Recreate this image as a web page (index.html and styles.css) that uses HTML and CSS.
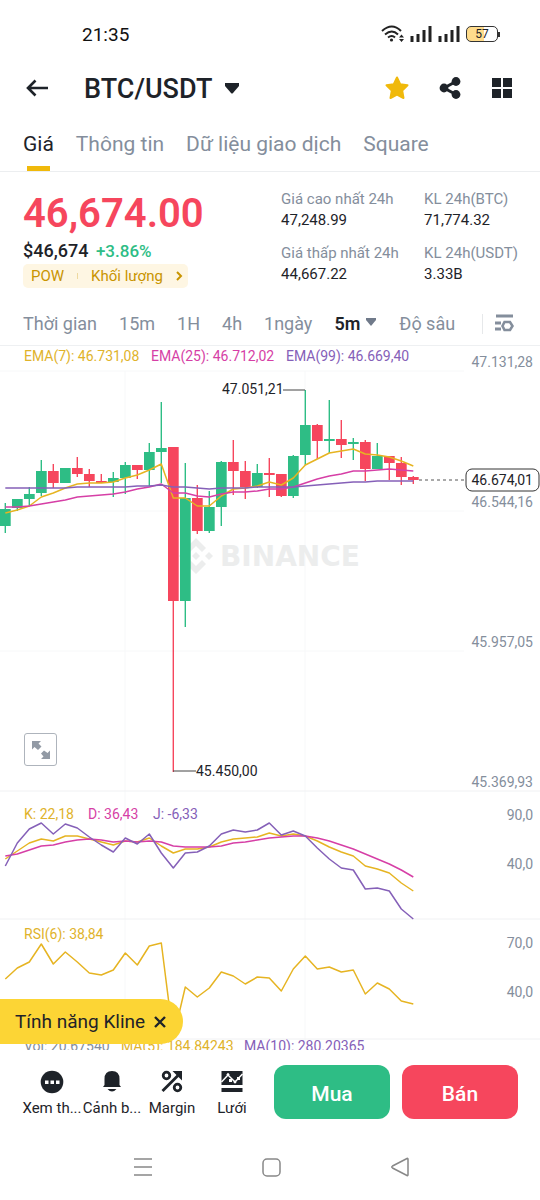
FILE: index.html
```
<!DOCTYPE html>
<html lang="vi">
<head>
    <meta charset="UTF-8">
    <meta name="viewport" content="width=device-width, initial-scale=1.0">
    <title>BTC/USDT</title>
    <link rel="stylesheet" href="styles.css">
</head>
<body>

    <div class="status-bar">
        <span class="clock">21:35</span>
        <div class="status-icons">
            <svg width="23" height="18" viewBox="0 0 23 18" fill="none" stroke="#222" stroke-width="2">
                <path d="M1 6 Q11 -3 20 6 M4 9.500 Q11 3.500 17 9.500 M7 12.500 Q11 9.500 14 12.500"/>
                <circle cx="10.500" cy="15" r="1.600" fill="#222" stroke="none"/>
                <path d="M18 12.500 L20.500 9.500 L23 12.500 Z M18 14 L20.500 17 L23 14 Z" fill="#222" stroke="none"/>
            </svg>
            <svg width="22" height="16" viewBox="0 0 22 16" stroke="#222" stroke-width="3">
                <path d="M2 16 V10 M8 16 V8 M14 16 V4 M20 16 V0"/>
            </svg>
            <svg width="22" height="16" viewBox="0 0 22 16" stroke="#222" stroke-width="3">
                <path d="M2 16 V10 M8 16 V8 M14 16 V4 M20 16 V0"/>
            </svg>
            <span class="battery">57</span>
        </div>
    </div>

    <header class="top-bar">
        <button class="icon-btn" aria-label="Quay lại">
            <svg width="22" height="18" viewBox="0 0 22 18" fill="none" stroke="#1e2329" stroke-width="2.600">
                <path d="M22 9 H2 M9.500 1.500 L2 9 L9.500 16.500"/>
            </svg>
        </button>
        <button class="pair">BTC/USDT
            <svg width="16" height="14" viewBox="0 0 16 14"><path d="M1 1 H15 V4 L9 11 Q8 12 7 11 L1 4 Z" fill="#1e2329"/></svg>
        </button>
        <div class="top-actions">
            <button class="icon-btn" aria-label="Yêu thích">
                <svg width="24" height="24" viewBox="0 0 24 24"><path d="M12 1.500 L15.200 8.300 L22.500 9.300 L17.200 14.600 L18.500 22 L12 18.600 L5.500 22 L6.800 14.600 L1.500 9.300 L8.800 8.300 Z" fill="#f0b90b" stroke="#f0b90b" stroke-width="2" stroke-linejoin="round"/></svg>
            </button>
            <button class="icon-btn" aria-label="Chia sẻ">
                <svg width="22" height="22" viewBox="0 0 22 22" fill="#1e2329">
                    <path d="M17 4.500 L5 11 L17 17.500" fill="none" stroke="#1e2329" stroke-width="3"/>
                    <circle cx="17" cy="4.500" r="4.400"/><circle cx="5" cy="11" r="4.400"/><circle cx="17" cy="17.500" r="4.400"/>
                </svg>
            </button>
            <button class="icon-btn" aria-label="Bố cục">
                <svg width="22" height="22" viewBox="0 0 22 22" fill="#1e2329">
                    <path d="M1 1 H10 V10 H1 Z M12 1 H21 V10 H12 Z M1 12 H10 V21 H1 Z M12 12 H21 V21 H12 Z"/>
                </svg>
            </button>
        </div>
    </header>

    <nav class="tabs">
        <a href="#" class="active">Giá</a>
        <a href="#">Thông tin</a>
        <a href="#">Dữ liệu giao dịch</a>
        <a href="#">Square</a>
    </nav>

    <section class="ticker">
        <div class="price-box">
            <div class="price">46,674.00</div>
            <div class="sub-price">$46,674 <span class="up">+3.86%</span></div>
            <button class="tag">
                <span>POW</span>
                <span class="tag-line"></span>
                <span>Khối lượng</span>
                <svg width="7" height="10" viewBox="0 0 7 10" fill="none" stroke="#c99400" stroke-width="2"><path d="M1 1 L5 5 L1 9"/></svg>
            </button>
        </div>
        <dl class="stats">
            <div><dt>Giá cao nhất 24h</dt><dd>47,248.99</dd></div>
            <div><dt>KL 24h(BTC)</dt><dd>71,774.32</dd></div>
            <div><dt>Giá thấp nhất 24h</dt><dd>44,667.22</dd></div>
            <div><dt>KL 24h(USDT)</dt><dd>3.33B</dd></div>
        </dl>
    </section>

    <div class="intervals">
        <button>Thời gian</button>
        <button>15m</button>
        <button>1H</button>
        <button>4h</button>
        <button>1ngày</button>
        <button class="active">5m
            <svg width="12" height="14" viewBox="0 0 12 14"><path d="M1 1 H11 V3 L6 9 L1 3 Z" fill="#707a8a"/></svg>
        </button>
        <button>Độ sâu</button>
        <button class="chart-settings" aria-label="Cài đặt biểu đồ">
            <svg width="19" height="20" viewBox="0 0 19 20" fill="none" stroke="#848e9c" stroke-width="3">
                <path d="M1 2 H18 M0 9 H6 M0 15 H6"/>
                <path d="M9.500 8 H15 L17.500 12 L15 16 H9.500 L7.500 12 Z" stroke-width="2.600"/>
            </svg>
        </button>
    </div>

    <main class="chart">
        <svg class="chart-svg" viewBox="0 346 540 704">
            <g class="grid-lines">
                <path d="M0 371 H464 M0 511 H464 M0 651 H464 M125 371 V1050 M305 371 V1050"/>
                <path class="panel-line" d="M0 791 H540 M0 919 H540 M0 1039 H540"/>
            </g>

            <g class="watermark">
                <path d="M186 548 L196 538 L206 548 L202 552 L196 546 L190 552 Z M186 564 L196 574 L206 564 L202 560 L196 566 L190 560 Z M196 552 L200 556 L196 560 L192 556 Z M209 552 L213 556 L209 560 L205 556 Z M183 552 L187 556 L183 560 L179 556 Z"/>
                <text x="220" y="566">BINANCE</text>
            </g>

            <g id="candles"></g>
            <g id="lines"></g>

            <path class="callout" d="M283 390 H305 M173 771 H196"/>
            <text class="callout-text" x="222" y="394">47.051,21</text>
            <text class="callout-text" x="196" y="776">45.450,00</text>

            <path class="last-line" d="M419 480 H465"/>
            <rect class="last-box" x="466" y="469" width="73" height="22" rx="6"/>
            <text class="last-text" x="533" y="485">46.674,01</text>

            <g class="legend">
                <text class="yellow" x="24" y="361">EMA(7): 46.731,08</text>
                <text class="pink" x="151" y="361">EMA(25): 46.712,02</text>
                <text class="purple" x="286" y="361">EMA(99): 46.669,40</text>
                <text class="yellow" x="24" y="819">K: 22,18</text>
                <text class="pink" x="88" y="819">D: 36,43</text>
                <text class="purple" x="153" y="819">J: -6,33</text>
                <text class="yellow" x="24" y="939">RSI(6): 38,84</text>
                <text class="gray" x="24" y="1051">Vol: 20.67540</text>
                <text class="yellow" x="121" y="1051">MA(5): 184.84243</text>
                <text class="purple" x="244" y="1051">MA(10): 280.20365</text>
            </g>

            <g class="axis">
                <text x="533" y="367">47.131,28</text>
                <text x="533" y="507">46.544,16</text>
                <text x="533" y="647">45.957,05</text>
                <text x="533" y="787">45.369,93</text>
                <text x="533" y="820">90,0</text>
                <text x="533" y="869">40,0</text>
                <text x="533" y="948">70,0</text>
                <text x="533" y="997">40,0</text>
            </g>
        </svg>

        <button class="expand" aria-label="Toàn màn hình">
            <svg width="20" height="20" viewBox="0 0 20 20" fill="#929aa5">
                <path d="M1 1 H10 L7.500 3.500 L10.500 6.500 L7 10 L3.500 7 L1 9.500 Z"/>
                <path d="M19 19 H10 L12.500 16.500 L10 13.500 L13 10.500 L16.500 13 L19 10.500 Z"/>
            </svg>
        </button>

        <button class="kline">Tính năng Kline
            <svg width="12" height="12" viewBox="0 0 12 12" stroke="#1e2329" stroke-width="2.400"><path d="M1 1 L11 11 M11 1 L1 11"/></svg>
        </button>
    </main>

    <footer class="actions">
        <div class="shortcuts">
            <button>
                <svg width="24" height="24" viewBox="0 0 24 24"><circle cx="12" cy="12" r="11.300" fill="#1e2329"/><path d="M5 10.500 h3.500 v3.500 h-3.500 Z M10.500 10.500 h3.500 v3.500 h-3.500 Z M16 10.500 h3.500 v3.500 h-3.500 Z" fill="#fff"/></svg>
                Xem th...
            </button>
            <button>
                <svg width="24" height="24" viewBox="0 0 24 24" fill="#1e2329"><path d="M4.500 15 V9 Q4.500 1 12 1 Q19.500 1 19.500 9 V15 L21 17 H3 L4.500 15 Z M7.500 19 H16.500 Q12 24 7.500 19 Z"/></svg>
                Cảnh b...
            </button>
            <button>
                <svg width="24" height="24" viewBox="0 0 24 24" fill="none" stroke="#1e2329" stroke-width="2.800">
                    <circle cx="6.500" cy="5.500" r="3.300"/><circle cx="17.500" cy="17.500" r="3.300"/>
                    <path d="M2.500 21 L18 5.500"/><path d="M12.500 1 H22 V10.500 Z" fill="#1e2329" stroke="none"/>
                </svg>
                Margin
            </button>
            <button>
                <svg width="24" height="24" viewBox="0 0 24 24">
                    <path d="M1.500 1 H22.500 V15 H1.500 Z M1.500 18 H22.500 V22 H1.500 Z" fill="#1e2329"/>
                    <path d="M1.500 12 L8 5 L15 12 L22.500 4" fill="none" stroke="#fff" stroke-width="1.500"/>
                    <path d="M6.300 4.500 L8 2.800 L9.700 4.500 L8 6.200 Z M13.300 12 L15 10.300 L16.700 12 L15 13.700 Z M9 9 h3 v3 h-3 Z M17 7 h3 v3 h-3 Z" fill="#fff"/>
                </svg>
                Lưới
            </button>
        </div>
        <button class="trade buy">Mua</button>
        <button class="trade sell">Bán</button>
    </footer>

    <div class="phone-nav">
        <button class="icon-btn" aria-label="Menu"><svg width="20" height="20" viewBox="0 0 20 20" stroke="#888" stroke-width="1.500"><path d="M1 2 H19 M1 10 H19 M1 18 H19"/></svg></button>
        <button class="icon-btn" aria-label="Trang chủ"><svg width="20" height="20" viewBox="0 0 20 20" fill="none" stroke="#888" stroke-width="1.500"><rect x="1" y="2" width="17" height="17" rx="4"/></svg></button>
        <button class="icon-btn" aria-label="Trở về"><svg width="20" height="20" viewBox="0 0 20 20" fill="none" stroke="#888" stroke-width="1.500"><path d="M17 1.500 Q18 1 18 2.500 V17.500 Q18 19 17 18.500 L2.500 11 Q1 10 2.500 9 Z"/></svg></button>
    </div>

    <script>
        const GREEN = "#2ebd85";
        const RED = "#f6465d";
        const STEP = 12;

        // [màu, thân trên, thân dưới, bóng trên, bóng dưới]
        const candles = [
            ["g", 509, 526, 503, 533], ["g", 499, 508, 499, 511], ["g", 494, 499, 487, 506],
            ["g", 471, 493, 460, 496], ["r", 471, 483, 464, 488], ["g", 468, 483, 468, 483],
            ["r", 468, 474, 457, 477], ["r", 474, 481, 469, 487], ["r", 481, 483, 474, 483],
            ["g", 478, 482, 472, 497], ["g", 465, 478, 462, 494], ["r", 465, 470, 465, 479],
            ["g", 452, 470, 443, 486], ["g", 448, 452, 402, 483], ["r", 447, 601, 447, 772],
            ["g", 498, 601, 463, 627], ["r", 498, 531, 485, 534], ["g", 507, 531, 491, 533],
            ["g", 462, 507, 461, 526], ["r", 462, 471, 440, 495], ["r", 471, 487, 461, 499],
            ["g", 473, 487, 464, 488], ["r", 473, 475, 458, 497], ["r", 474, 496, 474, 497],
            ["g", 456, 496, 455, 498], ["g", 425, 455, 390, 465], ["r", 425, 441, 424, 459],
            ["g", 439, 441, 400, 453], ["r", 439, 445, 420, 458], ["g", 442, 444, 438, 460],
            ["r", 442, 469, 440, 481], ["g", 456, 469, 443, 469], ["r", 456, 463, 456, 480],
            ["r", 463, 477, 457, 485], ["r", 477, 480, 476, 484]
        ];

        const lines = [
            // EMA
            ["#e6b422", [513, 510, 506, 497, 493, 488, 484, 483, 483, 482, 478, 475, 470, 464, 498, 498, 506, 506, 496, 489, 488, 486, 482, 485, 478, 465, 459, 453, 451, 449, 454, 455, 457, 461, 466]],
            ["#d63fa6", [507, 507, 506, 504, 502, 500, 497, 496, 495, 494, 492, 489, 487, 484, 493, 493, 496, 497, 494, 492, 492, 491, 489, 489, 487, 483, 479, 476, 474, 471, 471, 470, 469, 470, 471]],
            ["#8560b8", [488, 488, 488, 488, 488, 488, 487, 487, 487, 487, 487, 486, 486, 485, 487, 487, 488, 489, 488, 488, 488, 487, 487, 487, 487, 486, 485, 484, 483, 482, 482, 481, 481, 481, 481]],
            // KDJ
            ["#e6b422", [859, 851, 843, 839, 841, 836, 836, 839, 842, 845, 841, 842, 838, 846, 853, 849, 849, 847, 842, 839, 838, 837, 833, 836, 834, 836, 841, 847, 852, 856, 866, 869, 873, 883, 891]],
            ["#d63fa6", [856, 854, 850, 846, 845, 842, 840, 839, 840, 842, 841, 842, 841, 842, 846, 847, 847, 847, 846, 843, 842, 840, 838, 837, 836, 836, 838, 841, 845, 849, 854, 859, 864, 870, 877]],
            ["#8560b8", [866, 843, 829, 823, 834, 824, 828, 837, 845, 852, 838, 844, 834, 853, 868, 853, 852, 846, 834, 830, 832, 830, 823, 835, 831, 836, 848, 859, 868, 870, 889, 888, 891, 909, 919]],
            // RSI
            ["#e6b422", [979, 968, 962, 944, 964, 952, 962, 973, 975, 970, 953, 965, 946, 943, 1038, 987, 997, 988, 972, 976, 984, 977, 978, 991, 969, 956, 969, 967, 972, 970, 994, 983, 989, 1001, 1004]]
        ];

        function add(parent, name, attrs) {
            const el = document.createElementNS("http://www.w3.org/2000/svg", name);
            for (const key in attrs) {
                el.setAttribute(key, attrs[key]);
            }
            parent.appendChild(el);
        }

        const candleGroup = document.getElementById("candles");
        candles.forEach(function (c, i) {
            const fill = c[0] === "g" ? GREEN : RED;
            add(candleGroup, "rect", { x: i * STEP + 4.6, y: c[3], width: 1.4, height: c[4] - c[3], fill: fill });
            add(candleGroup, "rect", { x: i * STEP, y: c[1], width: 10.7, height: c[2] - c[1], fill: fill });
        });

        const lineGroup = document.getElementById("lines");
        lines.forEach(function (line) {
            const points = line[1].map((y, i) => (i * STEP + 5.3) + "," + y).join(" ");
            add(lineGroup, "polyline", { points: points, stroke: line[0] });
        });
    </script>

</body>
</html>
```
FILE: styles.css
```
* {
    box-sizing: border-box;
}

body {
    font-family: Roboto, "Noto Sans", sans-serif;
    background-color: #fff;
    color: #1e2329;
    margin: 0;
}

button {
    font-family: inherit;
    color: inherit;
    background: none;
    border: none;
    padding: 0;
    cursor: pointer;
}

svg {
    display: block;
}

.icon-btn {
    display: flex;
}

/* Thanh trạng thái */
.status-bar {
    display: flex;
    justify-content: space-between;
    align-items: center;
    height: 68px;
    padding: 0 42px 0 82px;
}

.clock {
    font-size: 19px;
    color: #111;
}

.status-icons {
    display: flex;
    align-items: center;
    gap: 6px;
}

.battery {
    position: relative;
    width: 32px;
    border: 1px solid #333;
    border-radius: 5px;
    font-size: 12px;
    line-height: 14px;
    text-align: center;
    background: linear-gradient(to right, #ffdc8c 57%, #fff 57%);
}

.battery::after {
    content: "";
    position: absolute;
    right: -3px;
    top: 5px;
    width: 2px;
    height: 5px;
    background-color: #333;
}

.top-bar {
    display: flex;
    align-items: center;
    height: 40px;
    padding: 0 27px 0 26px;
}

.pair {
    display: flex;
    align-items: center;
    gap: 12px;
    margin-left: 36px;
    padding-top: 2px;
    font-size: 27px;
    font-weight: 500;
}

.top-actions {
    display: flex;
    align-items: center;
    gap: 30px;
    margin-left: auto;
}

.tabs {
    display: flex;
    gap: 22px;
    height: 64px;
    padding: 0 23px;
    border-bottom: 1px solid #eceef0;
}

.tabs a {
    position: relative;
    color: #848e9c;
    text-decoration: none;
    font-size: 21px;
    line-height: 72px;
}

.tabs .active {
    color: #1e2329;
}

.tabs .active::after {
    content: "";
    position: absolute;
    left: 4px;
    right: 4px;
    bottom: 0;
    height: 5px;
    background-color: #f0b90b;
}

/* Giá hiện tại */
.ticker {
    display: flex;
    justify-content: space-between;
    padding: 17px 22px 0 23px;
}

.price {
    font-size: 40px;
    line-height: 49px;
    font-weight: 600;
    color: #f6465d;
}

.sub-price {
    font-size: 18px;
    line-height: 26px;
    font-weight: 500;
}

.up {
    color: #2ebd85;
    font-size: 17px;
    margin-left: 3px;
}

.tag {
    display: flex;
    align-items: center;
    gap: 13px;
    height: 24px;
    padding: 0 5px 0 8px;
    border-radius: 5px;
    background-color: #fef6e3;
    color: #c99400;
    font-size: 15px;
}

.tag-line {
    width: 1px;
    height: 6px;
    background-color: #eed9a0;
}

.stats {
    display: grid;
    grid-template-columns: 143px auto;
    align-content: start;
    row-gap: 12px;
    margin: 0;
}

.stats dt {
    font-size: 15px;
    line-height: 21px;
    color: #848e9c;
}

.stats dd {
    margin: 0;
    font-size: 15px;
    line-height: 21px;
}

.intervals {
    display: flex;
    align-items: center;
    gap: 22px;
    height: 58px;
    padding: 14px 26px 0 23px;
    border-bottom: 1px solid #eef0f2;
}

.intervals button {
    display: flex;
    align-items: center;
    gap: 5px;
    font-size: 18px;
    line-height: 22px;
    color: #848e9c;
    white-space: nowrap;
}

.intervals .active {
    color: #1e2329;
    font-weight: 600;
}

.intervals .chart-settings {
    margin-left: auto;
    padding-left: 12px;
    border-left: 1px solid #e6e8ea;
}

/* Biểu đồ */
.chart {
    position: relative;
}

.chart-svg {
    width: 100%;
    height: auto;
    font-size: 14px;
}

.grid-lines {
    fill: none;
    stroke: #f7f8f9;
}

.panel-line {
    stroke: #f0f1f3;
}

.watermark {
    fill: #eceded;
    font-family: "DejaVu Sans", sans-serif;
    font-size: 28px;
    font-weight: bold;
}

#lines {
    fill: none;
    stroke-width: 1.5px;
    stroke-linejoin: round;
}

.callout {
    fill: none;
    stroke: #444;
}

.callout-text {
    fill: #1e2329;
}

.last-line {
    stroke: #555;
    stroke-dasharray: 3 3;
}

.last-box {
    fill: #fff;
    stroke: #333;
}

.last-text {
    fill: #1e2329;
    text-anchor: end;
}

.axis {
    fill: #848e9c;
    text-anchor: end;
}

.yellow {
    fill: #dfb32b;
}

.pink {
    fill: #d63fa6;
}

.purple {
    fill: #8560b8;
}

.gray {
    fill: #848e9c;
}

.expand {
    position: absolute;
    left: 24px;
    bottom: 284px;
    display: flex;
    align-items: center;
    justify-content: center;
    width: 33px;
    height: 33px;
    border: 1px solid #aeb4bc;
    border-radius: 3px;
    background-color: #fff;
}

.kline {
    position: absolute;
    left: 0;
    bottom: 6px;
    display: flex;
    align-items: center;
    gap: 9px;
    height: 45px;
    padding: 0 17px 0 15px;
    border-radius: 0 23px 23px 0;
    background-color: #fcd535;
    font-size: 19px;
}

/* Nút dưới */
.actions {
    display: flex;
    align-items: center;
    gap: 12px;
    padding: 15px 22px;
}

.shortcuts {
    display: flex;
    flex: 240;
    padding-top: 4px;
}

.shortcuts button {
    display: flex;
    flex: 1 1 0;
    min-width: 0;
    flex-direction: column;
    align-items: center;
    gap: 4px;
    font-size: 15px;
    line-height: 20px;
    white-space: nowrap;
}

.trade {
    flex: 116;
    height: 54px;
    padding-top: 3px;
    border-radius: 12px;
    color: #fff;
    font-size: 21px;
    font-weight: 500;
}

.buy {
    background-color: #2ebd85;
}

.sell {
    background-color: #f6465d;
}

.phone-nav {
    display: flex;
    justify-content: space-between;
    padding: 23px 130px 22px 133px;
}
```
